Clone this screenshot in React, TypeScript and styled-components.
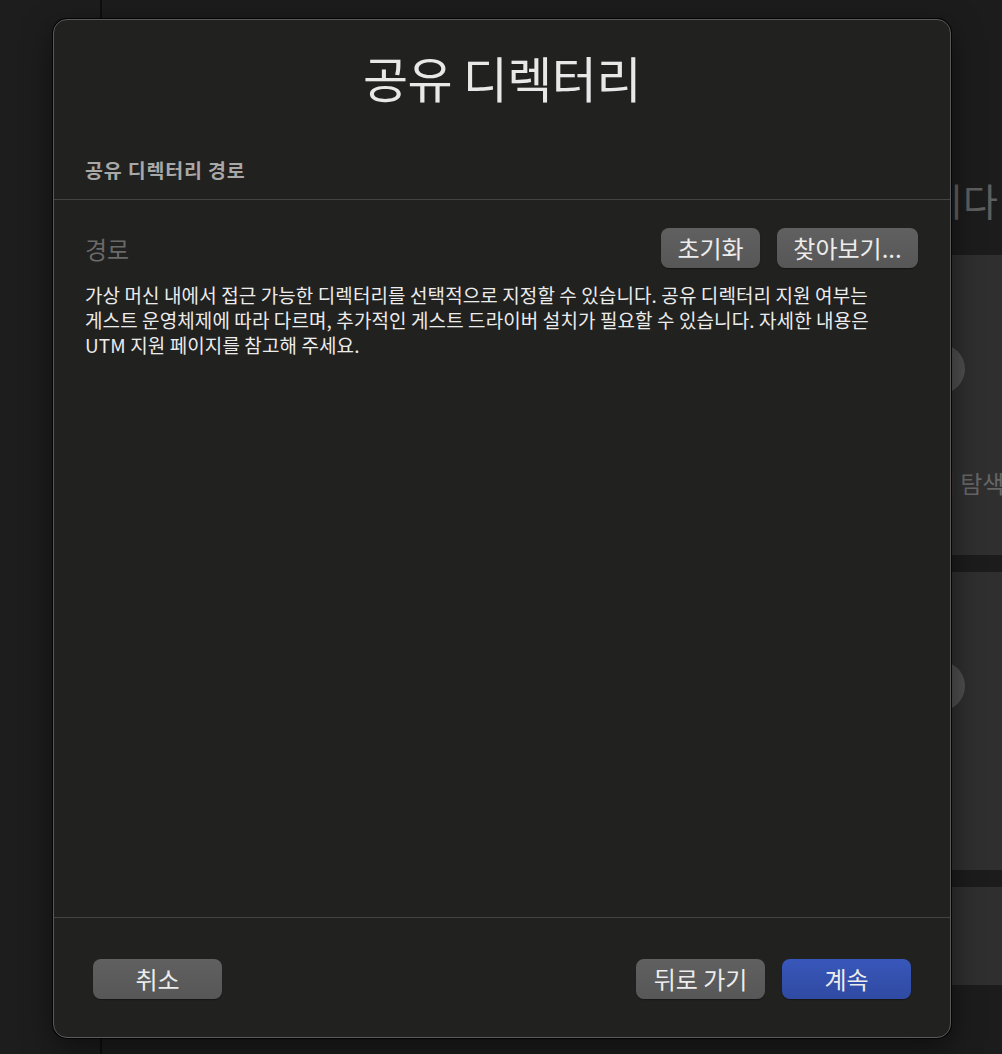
import React from "react";
import styled, { createGlobalStyle } from "styled-components";

const Global = createGlobalStyle`
  html, body { margin: 0; padding: 0; background: #1c1c1c; }
  body { font-family: "Noto Sans CJK KR", "Noto Sans", sans-serif; }
  * { box-sizing: border-box; }
`;

const Screen = styled.div`
  position: relative;
  width: 1002px;
  height: 1054px;
  overflow: hidden;
  display: grid;
  grid-template-columns: 102px 900px;
  background: #1c1c1c;
`;

const Sidebar = styled.div`
  border-right: 2px solid #0e0e0e;
  background: #1d1d1d;
`;

const Main = styled.div`
  display: flex;
  flex-direction: column;
  overflow: hidden;
  padding: 176px 0 0 0;
`;

const Welcome = styled.div`
  height: 48px;
  font-size: 38px;
  line-height: 48px;
  color: #5e5e5e;
  text-align: right;
  padding-right: 4px;
  white-space: nowrap;
`;

const CardGrid = styled.div`
  margin-top: 31px;
  margin-right: -206px;
  padding-left: 40px;
  display: grid;
  grid-template-columns: 1fr 1fr;
  grid-template-rows: 300px 298px 98px;
  gap: 17px 20px;
`;

const Card = styled.div`
  background: linear-gradient(90deg, #2b2b2b, #323232);
  border-radius: 6px;
  display: flex;
  flex-direction: column;
  align-items: center;
  justify-content: flex-start;
  padding-top: 89px;
  gap: 74px;
`;

const CardIcon = styled.div`
  width: 50px;
  height: 50px;
  margin-right: 14px;
  border-radius: 50%;
  background: #4e4e4e;
`;

const CardLabel = styled.div<{ $show?: boolean }>`
  font-size: 24px;
  line-height: 30px;
  color: #666;
  white-space: nowrap;
  visibility: ${(p) => (p.$show ? "visible" : "hidden")};
`;

const Sheet = styled.div`
  position: absolute;
  left: 53px;
  top: 19px;
  width: 898px;
  height: 1019px;
  background: #212120;
  border: 1px solid #5a5a5a;
  border-radius: 14px;
  box-shadow: 0 0 0 1px #050505, 0 10px 30px rgba(0, 0, 0, 0.5);
  display: flex;
  flex-direction: column;
`;

const Title = styled.h1`
  margin: 25px 0 0 0;
  font-size: 49px;
  line-height: 64px;
  font-weight: 400;
  letter-spacing: -0.5px;
  text-align: center;
  color: #e8e8e8;
`;

const SectionLabel = styled.div`
  margin-top: 48px;
  padding: 0 31px 16px;
  font-size: 19.5px;
  line-height: 26px;
  letter-spacing: 0.8px;
  font-weight: 700;
  color: #a8a8a8;
  border-bottom: 1px solid #444;
`;

const Body = styled.div`
  flex: 1;
  padding: 28px 32px 0 31px;
  display: flex;
  flex-direction: column;
`;

const PathRow = styled.div`
  display: flex;
  align-items: center;
  height: 40px;
  gap: 17px;
`;

const PathLabel = styled.div`
  flex: 1;
  font-size: 24px;
  color: #6a6a6a;
`;

const Button = styled.button<{ $w?: number; $primary?: boolean }>`
  height: 40px;
  ${(p) => (p.$w ? `width: ${p.$w}px;` : "padding: 0 15px;")}
  border: none;
  border-radius: 8px;
  font-family: inherit;
  font-size: 24px;
  line-height: 40px;
  color: #ececec;
  background: ${(p) =>
    p.$primary
      ? "linear-gradient(180deg, #3857ba 0%, #2f4aa2 100%)"
      : "linear-gradient(180deg, #606060 0%, #575757 100%)"};
  box-shadow: 0 1px 1px rgba(0, 0, 0, 0.35);
  display: flex;
  align-items: center;
  justify-content: center;
  white-space: nowrap;
`;

const Description = styled.p`
  margin: 14px 0 0 0;
  font-size: 19px;
  line-height: 25px;
  letter-spacing: 0.1px;
  color: #ececec;
`;

const Footer = styled.div`
  border-top: 1px solid #444;
  padding: 41px 39px 38px;
  display: flex;
  align-items: center;
  gap: 17px;
`;

const Spacer = styled.div`
  flex: 1;
`;

export default function App() {
  return (
    <>
      <Global />
      <Screen>
        <Sidebar />
        <Main>
          <Welcome>UTM에 오신 것을 환영합니다</Welcome>
          <CardGrid>
            <Card>
              <CardIcon />
              <CardLabel>새 가상 머신 만들기</CardLabel>
            </Card>
            <Card>
              <CardIcon />
              <CardLabel $show>갤러리 탐색</CardLabel>
            </Card>
            <Card>
              <CardIcon />
              <CardLabel>사용자 가이드</CardLabel>
            </Card>
            <Card>
              <CardIcon />
              <CardLabel>지원</CardLabel>
            </Card>
            <Card />
            <Card />
          </CardGrid>
        </Main>

        <Sheet>
          <Title>공유 디렉터리</Title>
          <SectionLabel>공유 디렉터리 경로</SectionLabel>
          <Body>
            <PathRow>
              <PathLabel>경로</PathLabel>
              <Button $w={99}>초기화</Button>
              <Button $w={141}>찾아보기...</Button>
            </PathRow>
            <Description>
              가상 머신 내에서 접근 가능한 디렉터리를 선택적으로 지정할 수 있습니다. 공유 디렉터리 지원 여부는
              <br />
              게스트 운영체제에 따라 다르며, 추가적인 게스트 드라이버 설치가 필요할 수 있습니다. 자세한 내용은
              <br />
              UTM 지원 페이지를 참고해 주세요.
            </Description>
          </Body>
          <Footer>
            <Button $w={129}>취소</Button>
            <Spacer />
            <Button $w={129}>뒤로 가기</Button>
            <Button $w={129} $primary>
              계속
            </Button>
          </Footer>
        </Sheet>
      </Screen>
    </>
  );
}
